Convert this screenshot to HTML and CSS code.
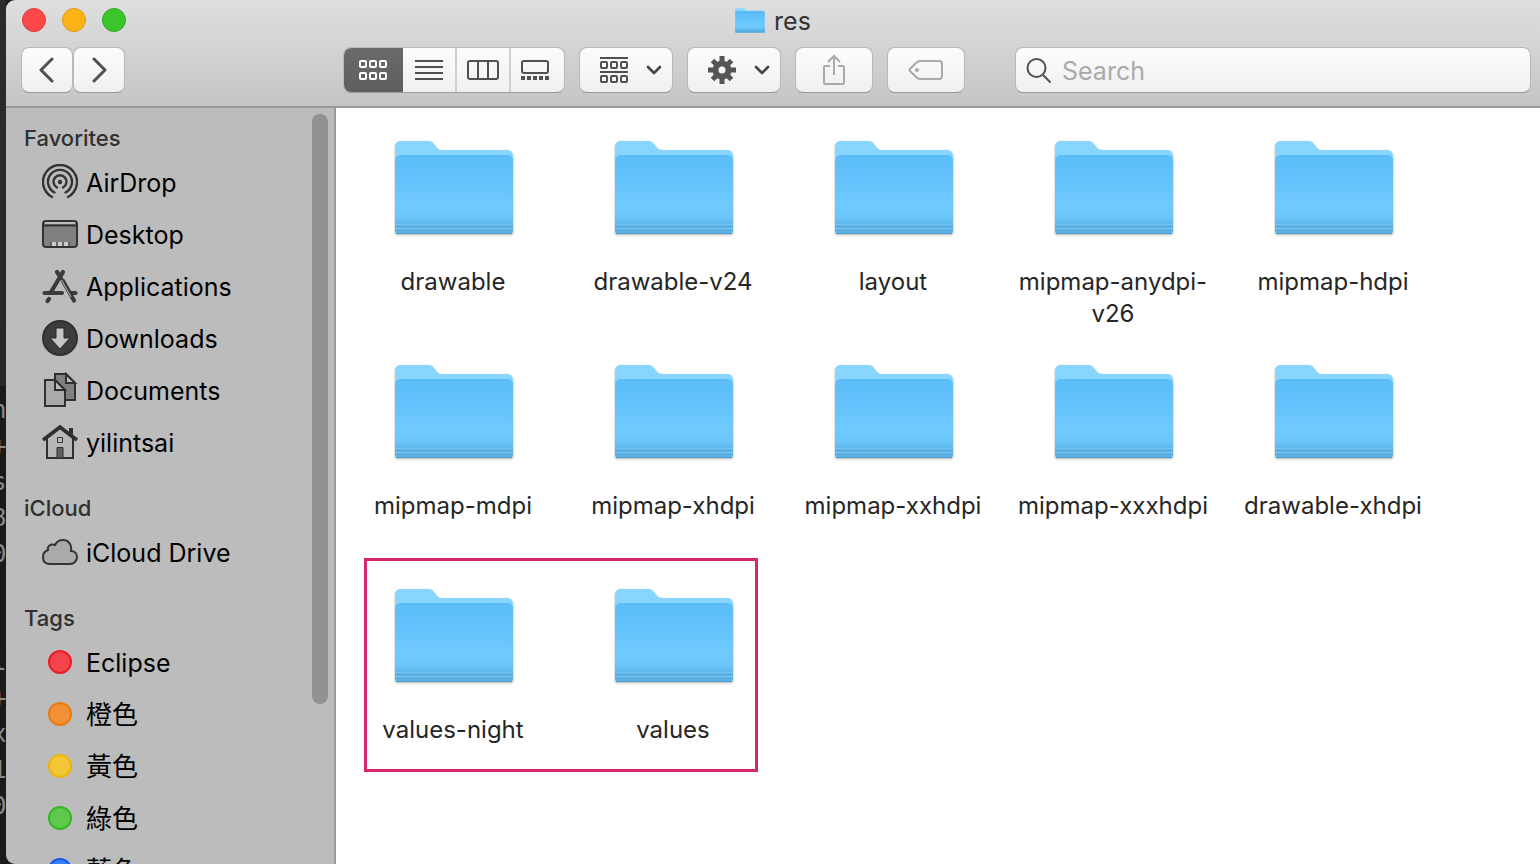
FILE: index.html
```html
<!DOCTYPE html>
<html lang="en">
<head>
<meta charset="utf-8">
<title>res</title>
<link rel="stylesheet" href="styles.css">
</head>
<body>
<svg class="defs" aria-hidden="true">
  <defs>
    <linearGradient id="front" x1="0" y1="0" x2="0" y2="1">
      <stop offset="0" stop-color="#5bbcf8"/>
      <stop offset="0.65" stop-color="#6fcafe"/>
      <stop offset="0.78" stop-color="#6cc6fa"/>
      <stop offset="0.88" stop-color="#5fb6ea"/>
      <stop offset="1" stop-color="#5cb3e8"/>
    </linearGradient>
    <symbol id="folder" viewBox="0 0 124 100">
      <path d="M3 92V6Q4 1 9 1H37Q40 1 42 4L45 8Q47 10 50 10H116Q121 11 121 16V92Z" fill="#88d6ff"/>
      <path d="M3 92V21Q3 15 9 15H115Q121 15 121 21V91Q121 94 118 94H6Q3 94 3 91Z" fill="url(#front)"/>
      <path d="M3 84.500H121M3 88.500H121" stroke="#74c1ee" fill="none"/>
      <path d="M3 86.500H121M3 90.500H121" stroke="#56aadd" fill="none"/>
      <path d="M4 93.500H120" stroke="#4a9ace" fill="none"/>
    </symbol>
    <symbol id="chevron" viewBox="0 0 16 10"><path d="M2 2L8 8L14 2" fill="none" stroke="#444" stroke-width="2.600" stroke-linecap="round" stroke-linejoin="round"/></symbol>
  </defs>
</svg>
<div class="desktop">
  <div class="backdrop" aria-hidden="true"><pre class="code">n
+
s
8
0</pre><pre class="code">l
+
x
1
0</pre></div>
  <div class="window">
    <header class="header">
      <div class="titlebar">
        <div class="lights">
          <button class="light red" aria-label="Close"></button>
          <button class="light amber" aria-label="Minimize"></button>
          <button class="light green" aria-label="Zoom"></button>
        </div>
        <h1 class="title"><svg class="title-icon" viewBox="2 0 120 96" preserveAspectRatio="none"><use href="#folder" width="124" height="100"/><path d="M3 15H121M3 92H121" stroke="#46a4dc" stroke-width="3"/></svg>res</h1>
      </div>
      <div class="toolbar">
        <div class="history">
          <button class="button nav" aria-label="Back"><svg width="16" height="26" viewBox="0 0 16 26"><path d="M13 2L2 13L13 24" class="arrow"/></svg></button>
          <button class="button nav" aria-label="Forward"><svg width="16" height="26" viewBox="0 0 16 26"><path d="M3 2L14 13L3 24" class="arrow"/></svg></button>
        </div>
        <div class="views">
          <button class="view active" aria-label="Icons"><svg width="30" height="22" viewBox="0 0 30 22" class="line"><rect x="2" y="2" width="6" height="6" rx="1"/><rect x="12" y="2" width="6" height="6" rx="1"/><rect x="22" y="2" width="6" height="6" rx="1"/><rect x="2" y="14" width="6" height="6" rx="1"/><rect x="12" y="14" width="6" height="6" rx="1"/><rect x="22" y="14" width="6" height="6" rx="1"/></svg></button>
          <button class="view" aria-label="List"><svg width="28" height="22" viewBox="0 0 28 22" class="line"><path d="M0 2H28M0 8H28M0 14H28M0 20H28"/></svg></button>
          <button class="view" aria-label="Columns"><svg width="32" height="22" viewBox="0 0 32 22" class="line"><rect x="1" y="2" width="30" height="18" rx="2"/><path d="M11 2V20M21 2V20"/></svg></button>
          <button class="view gallery" aria-label="Gallery"><svg width="28" height="22" viewBox="0 0 28 22" class="line"><rect x="1" y="2" width="26" height="12" rx="2"/><path d="M0 19H28" stroke-width="4" stroke-dasharray="4 2"/></svg></button>
        </div>
        <button class="button menu" aria-label="Group"><svg width="28" height="28" viewBox="0 0 28 28" class="line"><path d="M0 2H28M0 16H28"/><rect x="1" y="6" width="6" height="6" rx="1"/><rect x="11" y="6" width="6" height="6" rx="1"/><rect x="21" y="6" width="6" height="6" rx="1"/><rect x="1" y="20" width="6" height="6" rx="1"/><rect x="11" y="20" width="6" height="6" rx="1"/><rect x="21" y="20" width="6" height="6" rx="1"/></svg><svg width="16" height="10"><use href="#chevron"/></svg></button>
        <button class="button menu" aria-label="Action"><svg width="28" height="28" viewBox="0 0 28 28"><g stroke="#555" fill="none"><circle cx="14" cy="14" r="6.500" stroke-width="6"/><path d="M14 0V6M14 22V28M0 14H6M22 14H28M4.500 4.500L8 8M20 20L23.500 23.500M4.500 23.500L8 20M20 8L23.500 4.500" stroke-width="5"/></g></svg><svg width="16" height="10"><use href="#chevron"/></svg></button>
        <button class="button wide" aria-label="Share"><svg width="24" height="34" viewBox="0 0 24 34" class="pale"><path d="M8 13H3Q2 13 2 14V30Q2 31 3 31H21Q22 31 22 30V14Q22 13 21 13H16M12 22V3M6 9L12 3L18 9"/></svg></button>
        <button class="button wide" aria-label="Tags"><svg width="36" height="22" viewBox="0 0 36 22" class="pale"><path d="M12 2H31Q34 2 34 5V17Q34 20 31 20H12Q10 20 8 18L2 12Q1 11 2 10L8 4Q10 2 12 2Z"/><circle cx="9" cy="11" r="2" fill="#aaa" stroke="none"/></svg></button>
        <label class="search"><svg width="26" height="26" viewBox="0 0 26 26" class="line"><circle cx="10.500" cy="11" r="9"/><path d="M17 18L24.500 25.500"/></svg><input type="search" placeholder="Search" aria-label="Search"></label>
      </div>
    </header>
    <div class="main">
      <aside class="sidebar">
        <nav class="places">
          <section class="group">
            <h2 class="heading">Favorites</h2>
            <a class="place" href="#"><svg class="icon" viewBox="0 0 36 36"><g fill="none" stroke="#333" stroke-width="2.400" stroke-linecap="round"><path d="M10 33A17 17 0 1 1 26 33"/><path d="M12.500 28.500A12 12 0 1 1 23.500 28.500"/><path d="M15 23.500A6.500 6.500 0 1 1 21 23.500"/></g><circle cx="18" cy="18" r="2.200" fill="#333"/></svg>AirDrop</a>
            <a class="place" href="#"><svg class="icon" viewBox="0 0 36 36"><rect x="1" y="5" width="34" height="26" rx="3" fill="#808080" stroke="#333" stroke-width="2"/><path d="M3 6H33V8H3Z" fill="#bbb"/><path d="M2 9.500H34" stroke="#333" stroke-width="2"/><path d="M8 30V26H28V30" fill="#666"/><path d="M10 26H14V30H10ZM16 26H20V30H16ZM22 26H26V30H22Z" fill="#ccc"/></svg>Desktop</a>
            <a class="place" href="#"><svg class="icon" viewBox="0 0 36 36"><g stroke="#3b3b3b" stroke-width="4.200" stroke-linecap="round" fill="none"><path d="M15 4L19 10M21 4L9 24M7 31L5.500 33M2.500 25H20M29 25H33.500M21 13L32 32.500"/></g><path d="M19.500 12L29 29" stroke="#bbb" stroke-width="1"/></svg>Applications</a>
            <a class="place" href="#"><svg class="icon" viewBox="0 0 36 36"><circle cx="18" cy="18" r="17" fill="#3d3d3d" stroke="#303030" stroke-width="2"/><path d="M14 8H22V18H28L18 29L8 18H14Z" fill="#c4c4c4" stroke="#262626"/></svg>Downloads</a>
            <a class="place" href="#"><svg class="icon" viewBox="0 0 36 36"><g stroke="#303030" stroke-width="2"><path d="M13 2H24L33 11V28H13Z" fill="#808080"/><path d="M24 2V11H33Z" fill="#bbb"/><path d="M3 8H13L23 18V34H3Z" fill="#aaa"/><path d="M13 8V18H23Z" fill="#bbb"/></g></svg>Documents</a>
            <a class="place" href="#"><svg class="icon" viewBox="0 0 36 36"><path d="M28 11V5H30V13" fill="#666" stroke="#303030" stroke-width="2"/><path d="M5 14L18 4L31 14V34H5Z" fill="#b8b8b8" stroke="#303030" stroke-width="2"/><path d="M1 16L18 3L35 16" fill="none" stroke="#303030" stroke-width="3.500"/><path d="M15.500 13.500H20.500V18.500H15.500Z" fill="#bbb" stroke="#303030"/><path d="M15 23.500H21V34H15Z" fill="#606060" stroke="#303030"/></svg>yilintsai</a>
          </section>
          <section class="group">
            <h2 class="heading">iCloud</h2>
            <a class="place" href="#"><svg class="icon" viewBox="0 0 36 36"><path d="M8 30C3 30 1 27 1 23C1 20 3 17 6 16C5 13 8 9 13 11C15 7 18 6 21 6C26 6 30 10 29 17C33 17 35 20 35 23C35 27 32 30 28 30Z" fill="#aaa" stroke="#333" stroke-width="2"/></svg>iCloud Drive</a>
          </section>
          <section class="group">
            <h2 class="heading">Tags</h2>
            <a class="place" href="#"><span class="tag tag-red"></span>Eclipse</a>
            <a class="place" href="#" lang="zh-TW"><span class="tag tag-orange"></span><span class="tag-name">橙色</span></a>
            <a class="place" href="#" lang="zh-TW"><span class="tag tag-yellow"></span><span class="tag-name">黃色</span></a>
            <a class="place" href="#" lang="zh-TW"><span class="tag tag-green"></span><span class="tag-name">綠色</span></a>
            <a class="place" href="#" lang="zh-TW"><span class="tag tag-blue"></span><span class="tag-name">藍色</span></a>
          </section>
        </nav>
        <div class="scrollbar"></div>
      </aside>
      <main class="files">
        <a class="file" href="#"><svg class="folder"><use href="#folder"/></svg><span class="name">drawable</span></a>
        <a class="file" href="#"><svg class="folder"><use href="#folder"/></svg><span class="name">drawable-v24</span></a>
        <a class="file" href="#"><svg class="folder"><use href="#folder"/></svg><span class="name">layout</span></a>
        <a class="file" href="#"><svg class="folder"><use href="#folder"/></svg><span class="name">mipmap-anydpi-<br>v26</span></a>
        <a class="file" href="#"><svg class="folder"><use href="#folder"/></svg><span class="name">mipmap-hdpi</span></a>
        <a class="file" href="#"><svg class="folder"><use href="#folder"/></svg><span class="name">mipmap-mdpi</span></a>
        <a class="file" href="#"><svg class="folder"><use href="#folder"/></svg><span class="name">mipmap-xhdpi</span></a>
        <a class="file" href="#"><svg class="folder"><use href="#folder"/></svg><span class="name">mipmap-xxhdpi</span></a>
        <a class="file" href="#"><svg class="folder"><use href="#folder"/></svg><span class="name">mipmap-xxxhdpi</span></a>
        <a class="file" href="#"><svg class="folder"><use href="#folder"/></svg><span class="name">drawable-xhdpi</span></a>
        <a class="file" href="#"><svg class="folder"><use href="#folder"/></svg><span class="name">values-night</span></a>
        <a class="file" href="#"><svg class="folder"><use href="#folder"/></svg><span class="name">values</span></a>
        <div class="marker"></div>
      </main>
    </div>
  </div>
</div>
</body>
</html>
```
FILE: styles.css
```css
* { box-sizing: border-box; }
body {
  margin: 0;
  font-family: Inter, "Noto Sans CJK TC", sans-serif;
  color: #000;
}
a { color: inherit; text-decoration: none; }
button { margin: 0; padding: 0; border: 0; font: inherit; }
svg { display: block; flex: none; }
.defs { position: absolute; width: 0; height: 0; }
.desktop { display: flex; height: 100vh; overflow: hidden; background: #1b1b1c; }
.backdrop {
  flex: none;
  display: flex;
  flex-direction: column;
  gap: 72px;
  width: 6px;
  overflow: hidden;
  padding-top: 392px;
  background: linear-gradient(#292c2f 0, #26282b 386px, #1a1a1a 386px);
}
.code {
  margin: 0 0 0 -8px;
  font: 24px/36px "DejaVu Sans Mono", monospace;
  color: #8b8b8b;
}
.window {
  flex: 1;
  min-width: 0;
  display: flex;
  flex-direction: column;
  overflow: hidden;
  border-radius: 9px 0 0 9px;
}
.header {
  flex: none;
  display: flex;
  flex-direction: column;
  gap: 7px;
  padding-bottom: 13px;
  border-bottom: 2px solid #999;
  background: linear-gradient(#dfdfdf, #c5c5c5);
}
.titlebar { display: grid; grid-template-columns: 1fr auto 1fr; align-items: center; height: 40px; }
.lights { display: flex; gap: 16px; padding-left: 16px; }
.light { width: 24px; height: 24px; border-radius: 50%; border: 1px solid; }
.red { background: #fb4848; border-color: #dd3b3e; }
.amber { background: #fdb316; border-color: #dc981c; }
.green { background: #3ac52b; border-color: #2fa722; }
.title {
  display: flex;
  align-items: center;
  gap: 9px;
  margin: 0;
  padding-top: 1px;
  font-size: 25px;
  font-weight: 400;
  line-height: 32px;
  color: #333;
}
.title-icon { width: 30px; height: 25px; }
.toolbar { display: flex; align-items: center; gap: 14px; padding: 0 9px 0 15px; }
.history { display: flex; margin-right: 204px; }
.button, .views, .search {
  display: flex;
  align-items: center;
  height: 46px;
  border: 1px solid #b8b8b8;
  border-bottom-color: #999;
  border-radius: 8px;
  background: linear-gradient(#fcfcfc, #f0f0f0);
}
.button { flex: none; justify-content: center; }
.nav { width: 52px; }
.arrow { fill: none; stroke: #505050; stroke-width: 3; stroke-linecap: round; stroke-linejoin: round; }
.views { flex: none; overflow: hidden; }
.view {
  display: flex;
  align-items: center;
  justify-content: center;
  width: 54px;
  height: 46px;
  border-left: 2px solid #d0d0d0;
  background: none;
  color: #505050;
}
.view.active {
  width: 60px;
  margin-left: -1px;
  border: 0;
  background: linear-gradient(#6b6b6b, #5e5e5e);
  color: #fff;
}
.view.active + .view { width: 52px; border: 0; }
.view.gallery { padding-right: 5px; width: 55px; }
.line { fill: none; stroke: currentColor; stroke-width: 2; }
.menu { gap: 18px; width: 94px; padding-left: 10px; color: #505050; }
.wide { width: 78px; }
.pale { fill: none; stroke: #aaa; stroke-width: 2; }
.search { flex: 1; min-width: 0; margin-left: 36px; padding: 0 10px; gap: 10px; color: #505050; }
.search input {
  flex: 1;
  min-width: 0;
  padding: 2px 0 0;
  border: 0;
  outline: 0;
  background: none;
  font: 25px/32px Inter, sans-serif;
  color: #333;
}
.search input::placeholder { color: #aaa; }
.main { flex: 1; min-height: 0; display: flex; }
.sidebar {
  flex: none;
  display: flex;
  width: 330px;
  border-right: 2px solid #999;
  background: #bcbcbc;
}
.places { flex: 1; padding-top: 15px; overflow: hidden; }
.group { margin-bottom: 24px; }
.heading {
  margin: 0 0 4px;
  padding-left: 18px;
  font-size: 22px;
  font-weight: 500;
  line-height: 30px;
  color: #303030;
}
.place {
  display: flex;
  align-items: center;
  gap: 8px;
  height: 52px;
  padding-left: 36px;
  font-size: 25px;
}
.icon { width: 36px; height: 36px; margin-bottom: 2px; }
.tag { width: 24px; height: 24px; margin: 0 6px 2px; border: 2px solid; border-radius: 50%; }
.tag-name { padding-bottom: 4px; font: 26px/36px "Noto Sans CJK TC", sans-serif; }
.tag-red { background: #f1454b; border-color: #ea1c25; }
.tag-orange { background: #f29135; border-color: #ec790a; }
.tag-yellow { background: #f3c637; border-color: #eeb50b; }
.tag-green { background: #5ec94d; border-color: #35b823; }
.tag-blue { background: #3c7ff8; border-color: #105df0; }
.scrollbar { width: 16px; height: 590px; margin: 6px 6px 0 0; border-radius: 8px; background: #919191; }
.files {
  flex: 1;
  min-width: 0;
  position: relative;
  display: grid;
  grid-template-columns: repeat(auto-fill, 220px);
  grid-auto-rows: 224px;
  align-content: start;
  padding-left: 8px;
  background: #fff;
}
.file {
  display: flex;
  flex-direction: column;
  align-items: center;
  gap: 26px;
  padding-top: 32px;
  font-size: 24px;
  line-height: 32px;
  text-align: center;
  color: #262626;
}
.folder { width: 124px; height: 100px; filter: drop-shadow(0 1px 1px rgba(0, 0, 0, 0.3)); }
.name { padding-right: 2px; }
.marker {
  position: absolute;
  grid-area: 3 / 1 / 4 / 3;
  inset: 2px 26px 8px 20px;
  border: 3px solid #d9256c;
  pointer-events: none;
}
```
